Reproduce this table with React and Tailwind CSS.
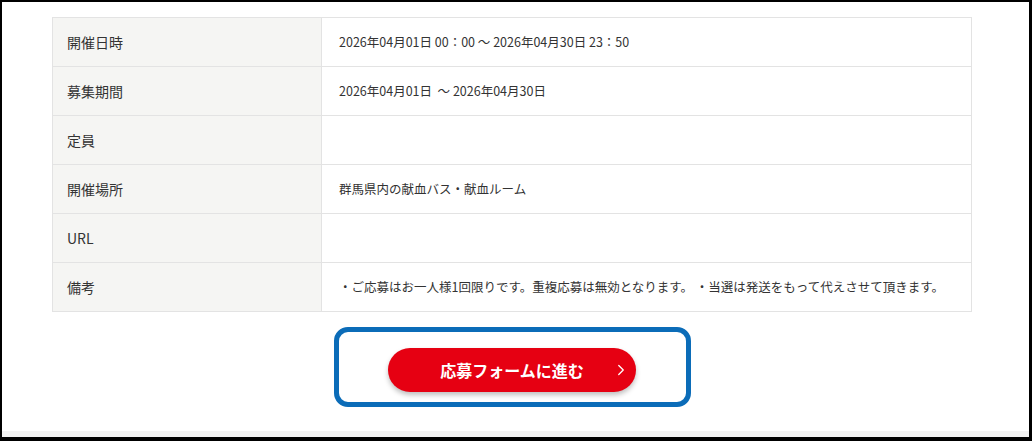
import { ChevronRight } from "lucide-react";

const rows = [
  { label: "開催日時", value: "2026年04月01日 00：00 ～ 2026年04月30日 23：50" },
  { label: "募集期間", value: "2026年04月01日  ～ 2026年04月30日" },
  { label: "定員", value: "" },
  { label: "開催場所", value: "群馬県内の献血バス・献血ルーム" },
  { label: "URL", value: "" },
  {
    label: "備考",
    value:
      "・ご応募はお一人様1回限りです。重複応募は無効となります。 ・当選は発送をもって代えさせて頂きます。",
  },
];

const App = () => {
  return (
    <div
      className="w-[1032px] h-[441px] bg-white border-t-2 border-l-2 border-r-[3px] border-b-4 border-black flex flex-col text-[#333]"
      style={{ fontFamily: '"Noto Sans CJK JP", "Noto Sans", sans-serif' }}
    >
      <div className="pt-[15px] pl-[50px]">
        <table className="w-[920px] border-collapse border border-[#e3e3e3]">
          <tbody>
            {rows.map((row) => (
              <tr key={row.label} className="h-[49px] border-b border-[#e3e3e3]">
                <td className="w-[269px] bg-[#f5f5f3] border-r border-[#e3e3e3] pl-[14px] text-[14px] align-middle">
                  {row.label}
                </td>
                <td className="pl-[17px] text-[12.5px] align-middle whitespace-pre">
                  {row.value}
                </td>
              </tr>
            ))}
          </tbody>
        </table>
      </div>

      <div className="flex justify-center mt-[15px] pr-[7px]">
        <div className="w-[357px] h-[80px] border-[5px] border-[#0b6cb8] rounded-[14px] flex justify-center pt-4">
          <button className="w-[248px] h-[44px] rounded-full bg-[#e60012] text-white font-bold text-[16px] shadow-[0_3px_5px_rgba(0,0,0,0.25)] relative flex items-center justify-center">
            <span>応募フォームに進む</span>
            <ChevronRight
              size={18}
              strokeWidth={1.75}
              className="absolute right-[6px] top-[13px]"
            />
          </button>
        </div>
      </div>

      <div className="flex-1" />
      <div className="h-[6px] bg-[#f2f2f2]" />
    </div>
  );
};

export default App;
